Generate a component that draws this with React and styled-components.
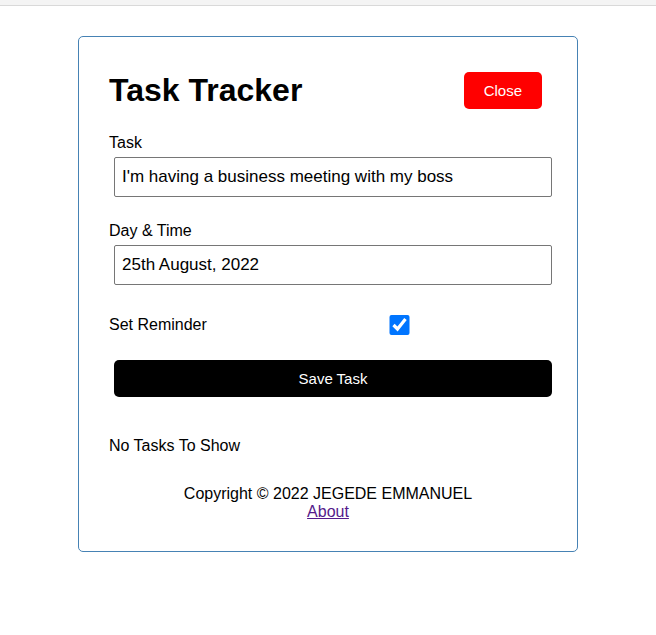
import React from 'react';
import styled, { createGlobalStyle } from 'styled-components';

const GlobalStyle = createGlobalStyle`
  * {
    margin: 0;
    padding: 0;
    box-sizing: border-box;
  }
  body {
    font-family: "Liberation Sans", Arial, sans-serif;
    background: #fff;
    color: #000;
  }
`;

const TopStrip = styled.div`
  height: 6px;
  background: #f4f4f4;
  border-bottom: 1px solid #d9d9d9;
`;

const Container = styled.div`
  max-width: 500px;
  margin: 30px auto;
  overflow: auto;
  min-height: 300px;
  border: 1px solid steelblue;
  padding: 30px;
  border-radius: 5px;
`;

const Header = styled.header`
  display: flex;
  justify-content: space-between;
  align-items: center;
  margin-bottom: 20px;
`;

const Title = styled.h1`
  font-size: 32px;
  font-weight: 700;
`;

const Button = styled.button`
  display: ${(p) => (p.$block ? 'block' : 'inline-block')};
  width: ${(p) => (p.$block ? '100%' : 'auto')};
  background: ${(p) => p.$bg};
  color: #fff;
  border: none;
  padding: 10px 20px;
  margin: 5px;
  border-radius: 5px;
  cursor: pointer;
  font-size: 15px;
  font-family: inherit;
`;

const Form = styled.form`
  margin-bottom: 40px;
`;

const Field = styled.div`
  margin: 20px 0;

  label {
    display: block;
    font-size: 16px;
    line-height: 18px;
  }

  input {
    width: 100%;
    height: 40px;
    margin: 5px;
    padding: 3px 7px;
    font-size: 17px;
    font-family: inherit;
    border: 1px solid #767676;
    border-radius: 2px;
    color: #000;
  }
`;

const CheckField = styled.div`
  margin: 20px 0;
  display: flex;
  align-items: center;
  justify-content: space-between;

  label {
    flex: 1;
    font-size: 16px;
    line-height: 18px;
  }

  input {
    flex: 2;
    height: 20px;
    margin: 5px;
  }
`;

const Empty = styled.h3`
  font-size: 16px;
  font-weight: 400;
  line-height: 18px;
`;

const Footer = styled.footer`
  margin-top: 30px;
  text-align: center;
  font-size: 16px;
  line-height: 18px;

  a {
    color: #551a8b;
  }
`;

export default function App() {
  return (
    <>
      <GlobalStyle />
      <TopStrip />
      <Container>
        <Header>
          <Title>Task Tracker</Title>
          <Button $bg="red">Close</Button>
        </Header>
        <Form onSubmit={(e) => e.preventDefault()}>
          <Field>
            <label>Task</label>
            <input type="text" defaultValue="I'm having a business meeting with my boss" />
          </Field>
          <Field>
            <label>Day &amp; Time</label>
            <input type="text" defaultValue="25th August, 2022" />
          </Field>
          <CheckField>
            <label>Set Reminder</label>
            <input type="checkbox" defaultChecked />
          </CheckField>
          <Button $bg="#000" $block type="submit">Save Task</Button>
        </Form>
        <Empty>No Tasks To Show</Empty>
        <Footer>
          <p>Copyright &copy; 2022 JEGEDE EMMANUEL</p>
          <a href="#about">About</a>
        </Footer>
      </Container>
    </>
  );
}
